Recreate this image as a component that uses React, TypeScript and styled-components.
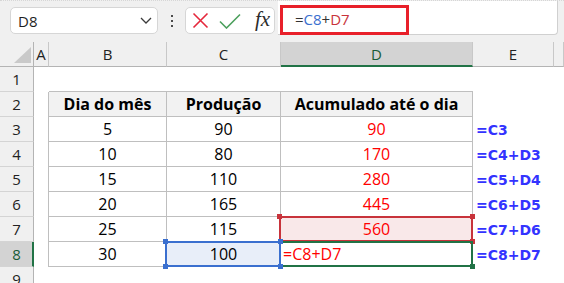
import React from "react";
import styled, { createGlobalStyle } from "styled-components";

const GlobalStyle = createGlobalStyle`
  html, body { margin: 0; padding: 0; background: #ffffff; overflow: hidden; }
  body { font-family: "Open Sans", "Noto Sans", sans-serif; color: #000; }
  * { box-sizing: border-box; }
`;

const GREEN = "#217346";
const BLUE_SEL = "#3a6fcf";
const RED_SEL = "#c8333b";

/* ---------- formula bar ---------- */

const Toolbar = styled.div`
  height: 42px;
  background: #f0f0f0;
  border-top: 1px dotted #d6d6d6;
  display: flex;
  align-items: flex-start;
  padding-left: 10px;
`;

const NameBox = styled.div`
  margin-top: 6px;
  width: 148px;
  height: 27px;
  background: #fff;
  border: 1px solid #d6d6d6;
  border-radius: 5px;
  display: flex;
  align-items: center;
  justify-content: space-between;
  padding: 0 5px 0 7px;
  font-size: 15px;
  color: #1f1f1f;
`;

const Grip = styled.div`
  margin: 14px 0 0 13px;
  display: flex;
  flex-direction: column;
  gap: 3px;
  & > span {
    width: 2px;
    height: 2px;
    background: #4a4a4a;
  }
`;

const FxBox = styled.div`
  margin: 6px 0 0 12px;
  width: 90px;
  height: 27px;
  background: #fff;
  border: 1px solid #d6d6d6;
  border-radius: 5px;
  display: flex;
  align-items: center;
  padding-left: 6px;
  gap: 10px;
`;

const FxLabel = styled.span`
  font-family: "Liberation Serif", "DejaVu Serif", serif;
  font-style: italic;
  font-size: 21px;
  line-height: 1;
  color: #2b2b2b;
  margin-left: 4px;
  margin-top: -2px;
`;

const FormulaField = styled.div`
  flex: 1;
  margin: 0 6px 0 3px;
  height: 34px;
  background: #fff;
  border-right: 1px solid #d0d0d0;
  border-bottom: 1px solid #d0d0d0;
  border-bottom-right-radius: 4px;
  display: flex;
  align-items: flex-start;
`;

const FormulaText = styled.div`
  margin: 4px 0 0 2px;
  width: 129px;
  height: 30px;
  border: 3px solid #e8202a;
  padding-left: 12px;
  font-size: 15px;
  line-height: 23px;
  color: #333;
`;

const Ref = styled.span<{ $color: string }>`
  color: ${(p) => p.$color};
`;

/* ---------- sheet ---------- */

const Sheet = styled.div`
  display: grid;
  grid-template-columns: 34px 15px 118px 114px 192px 81px 1fr;
  grid-auto-rows: 25px;
`;

const Corner = styled.div`
  background: #f0f0f0;
  border-right: 1px solid #b4b4b4;
  border-bottom: 1px solid #b4b4b4;
  display: flex;
  justify-content: flex-end;
  align-items: flex-end;
  padding: 0 2px 3px 0;
`;

const ColHeader = styled.div<{ $selected?: boolean }>`
  background: ${(p) => (p.$selected ? "#d3d3d3" : "#f0f0f0")};
  border-right: 1px solid #c8c8c8;
  border-bottom: ${(p) => (p.$selected ? `2px solid ${GREEN}` : "1px solid #b4b4b4")};
  display: flex;
  align-items: center;
  justify-content: center;
  font-size: 15px;
  color: ${(p) => (p.$selected ? "#185c37" : "#222")};
  padding-top: ${(p) => (p.$selected ? "1px" : "0")};
`;

const RowHeader = styled.div<{ $selected?: boolean }>`
  background: ${(p) => (p.$selected ? "#d3d3d3" : "#f0f0f0")};
  border-right: ${(p) => (p.$selected ? `2px solid ${GREEN}` : "1px solid #b4b4b4")};
  border-bottom: 1px solid #d4d4d4;
  display: flex;
  align-items: center;
  justify-content: center;
  font-size: 15px;
  color: ${(p) => (p.$selected ? "#185c37" : "#222")};
  padding-left: ${(p) => (p.$selected ? "1px" : "0")};
`;

/* empty cell; edges draw the outer frame of the table */
const Blank = styled.div<{ $right?: boolean; $bottom?: boolean }>`
  background: #fff;
  border-right: ${(p) => (p.$right ? "1px solid #bfbfbf" : "none")};
  border-bottom: ${(p) => (p.$bottom ? "1px solid #bfbfbf" : "none")};
`;

const Cell = styled.div<{
  $head?: boolean;
  $color?: string;
  $fill?: string;
  $left?: boolean;
}>`
  position: relative;
  background: ${(p) => p.$fill ?? (p.$head ? "#f2f2f2" : "#fff")};
  border-right: 1px solid #bfbfbf;
  border-bottom: 1px solid #bfbfbf;
  display: flex;
  align-items: center;
  justify-content: ${(p) => (p.$left ? "flex-start" : "center")};
  padding-left: ${(p) => (p.$left ? "2px" : "0")};
  font-size: 16px;
  font-weight: ${(p) => (p.$head ? 700 : 400)};
  color: ${(p) => p.$color ?? "#000"};
  white-space: nowrap;
`;

const Note = styled.div`
  background: #fff;
  display: flex;
  align-items: center;
  padding-left: 3px;
  font-family: "DejaVu Sans", Verdana, sans-serif;
  font-weight: 700;
  font-size: 14px;
  color: #3333ff;
  white-space: nowrap;
  overflow: visible;
`;

/* selection / reference outline drawn over a cell */
const Frame = styled.span<{ $color: string; $z: number }>`
  position: absolute;
  left: -2px;
  right: -1px;
  top: -1px;
  bottom: -1px;
  border: 2px solid ${(p) => p.$color};
  pointer-events: none;
  z-index: ${(p) => p.$z};
`;

type Corner4 = "tl" | "tr" | "bl" | "br";

const Handle = styled.span<{ $at: Corner4; $color: string }>`
  position: absolute;
  width: 5px;
  height: 5px;
  background: ${(p) => p.$color};
  ${(p) => (p.$at[0] === "t" ? "top: -4px;" : "bottom: -4px;")}
  ${(p) => (p.$at[1] === "l" ? "left: -4px;" : "right: -4px;")}
`;

const Outline = ({
  color,
  z,
  handles,
}: {
  color: string;
  z: number;
  handles: Corner4[];
}) => (
  <Frame $color={color} $z={z}>
    {handles.map((h) => (
      <Handle key={h} $at={h} $color={color} />
    ))}
  </Frame>
);

const rows = [
  { day: "5", prod: "90", acc: "90", note: "=C3" },
  { day: "10", prod: "80", acc: "170", note: "=C4+D3" },
  { day: "15", prod: "110", acc: "280", note: "=C5+D4" },
  { day: "20", prod: "165", acc: "445", note: "=C6+D5" },
  { day: "25", prod: "115", acc: "560", note: "=C7+D6" },
];

export default function App() {
  return (
    <>
      <GlobalStyle />
      <Toolbar>
        <NameBox>
          <span>D8</span>
          <svg width="12" height="7" viewBox="0 0 12 7">
            <polyline points="1,1 6,6 11,1" fill="none" stroke="#3a3a3a" strokeWidth="1.3" />
          </svg>
        </NameBox>
        <Grip>
          <span />
          <span />
          <span />
        </Grip>
        <FxBox>
          <svg width="17" height="17" viewBox="0 0 17 17">
            <path d="M1.5 1.5 L15.5 15.5 M15.5 1.5 L1.5 15.5" stroke="#e5283c" strokeWidth="1.6" />
          </svg>
          <svg width="22" height="16" viewBox="0 0 22 16">
            <path d="M1 8.5 L7.5 15 L21 1.5" fill="none" stroke="#4ca05d" strokeWidth="1.6" />
          </svg>
          <FxLabel>fx</FxLabel>
        </FxBox>
        <FormulaField>
          <FormulaText>
            =<Ref $color={BLUE_SEL}>C8</Ref>+<Ref $color={RED_SEL}>D7</Ref>
          </FormulaText>
        </FormulaField>
      </Toolbar>

      <Sheet>
        {/* column headers */}
        <Corner>
          <svg width="17" height="16" viewBox="0 0 17 16">
            <polygon points="17,0 17,16 0,16" fill="#c9c9c9" />
          </svg>
        </Corner>
        <ColHeader>A</ColHeader>
        <ColHeader>B</ColHeader>
        <ColHeader>C</ColHeader>
        <ColHeader $selected>D</ColHeader>
        <ColHeader>E</ColHeader>
        <ColHeader />

        {/* row 1 */}
        <RowHeader>1</RowHeader>
        <Blank />
        <Blank $bottom />
        <Blank $bottom />
        <Blank $bottom />
        <Blank />
        <Blank />

        {/* row 2: table head */}
        <RowHeader>2</RowHeader>
        <Blank $right />
        <Cell $head>Dia do mês</Cell>
        <Cell $head>Produção</Cell>
        <Cell $head>Acumulado até o dia</Cell>
        <Blank />
        <Blank />

        {rows.map((r, i) => {
          const last = i === rows.length - 1;
          return (
            <React.Fragment key={r.day}>
              <RowHeader>{i + 3}</RowHeader>
              <Blank $right />
              <Cell>{r.day}</Cell>
              <Cell>{r.prod}</Cell>
              <Cell $color="#ff0000" $fill={last ? "#f9e8e9" : undefined}>
                {r.acc}
                {last && <Outline color={RED_SEL} z={2} handles={["tl", "tr", "br"]} />}
              </Cell>
              <Note>{r.note}</Note>
              <Blank />
            </React.Fragment>
          );
        })}

        {/* row 8: cell being edited */}
        <RowHeader $selected>8</RowHeader>
        <Blank $right />
        <Cell>30</Cell>
        <Cell $fill="#e8eef9">
          100
          <Outline color={BLUE_SEL} z={4} handles={["tl", "tr", "bl", "br"]} />
        </Cell>
        <Cell $left $color="#ff0000">
          =C8+D7
          <Outline color={GREEN} z={3} handles={["br"]} />
        </Cell>
        <Note>=C8+D7</Note>
        <Blank />

        {/* row 9 */}
        <RowHeader>9</RowHeader>
        <Blank />
        <Blank />
        <Blank />
        <Blank />
        <Blank />
        <Blank />
      </Sheet>
    </>
  );
}
